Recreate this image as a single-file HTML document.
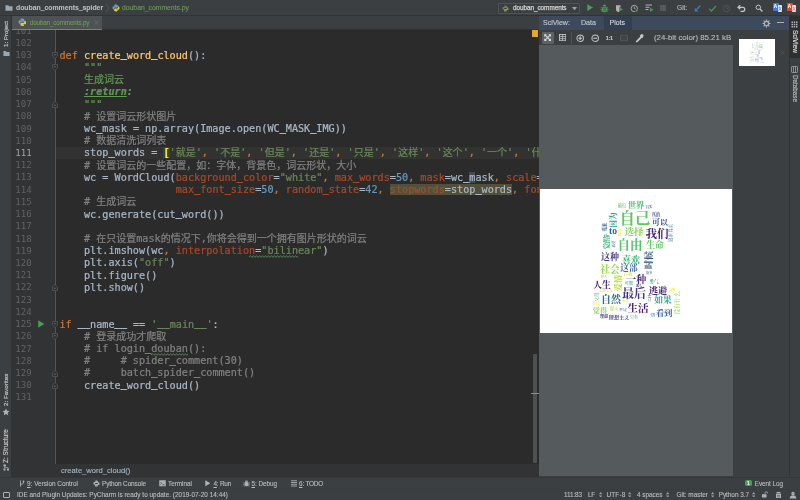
<!DOCTYPE html>
<html lang="zh">
<head>
<meta charset="utf-8">
<title>douban_comments_spider</title>
<style>
*{box-sizing:border-box;margin:0;padding:0}
html,body{width:800px;height:500px;overflow:hidden;background:#3c3f41}
body{position:relative;font-family:"Liberation Sans","Noto Sans CJK SC",sans-serif;color:#bbbbbb;font-size:7.6px;-webkit-font-smoothing:antialiased}
.abs{position:absolute}
#root{position:absolute;left:0;top:0;width:800px;height:500px;will-change:transform}
#title{left:0;top:0;width:800px;height:16px;background:#3c3f41;border-bottom:1px solid #323232}
#tabs{left:11px;top:16px;width:528px;height:14px;background:#3c3f41;border-bottom:1px solid #323232}
#tab1{left:11.5px;top:16px;width:90.5px;height:13.5px;background:#4e5254;border-bottom:1.5px solid #4a8fbb}
#leftbar{left:0;top:16px;width:11.5px;height:461px;background:#3c3f41;border-right:1px solid #323232}
#rightbar{left:789px;top:16px;width:11px;height:461px;background:#3c3f41;border-left:1px solid #323232}
#editor{left:11.5px;top:30px;width:527.5px;height:434px;background:#2b2b2b;overflow:hidden}
#gutter{left:0;top:0;width:44px;height:434px;background:#313335;border-right:1px solid #555555}
#curline{left:44px;top:117px;width:484px;height:12.2px;background:#323232}
.num{position:absolute;left:3.7px;width:30px;height:12.2px;line-height:12.2px;font-family:"DejaVu Sans Mono","Liberation Mono",monospace;font-size:9.1px;color:#606366;white-space:pre}
.num.cur{color:#a4a3a3}
.ln{position:absolute;left:48px;height:12.2px;line-height:12.2px;font-family:"DejaVu Sans Mono","Liberation Mono","Noto Sans CJK SC",monospace;font-size:10.17px;color:#a9b7c6;white-space:pre;-webkit-text-stroke:0.22px}
.k{color:#cc7832}.f{color:#ffc66d}.s{color:#6a8759}.c{color:#808080}.d{color:#629755}.n{color:#6897bb}.a{color:#aa4926}.p{color:#a9b7c6}
.dt{color:#629755;font-weight:bold;font-style:italic;text-decoration:underline}
.dt2{color:#629755;font-weight:bold;font-style:italic}
.br{color:#ffef28;background:#36443f;font-weight:bold}
.hl{background:#52503a}
.a2{color:#9a5233}
.mh{color:#a9b7c6;background:#454a50}
.sw{color:#6a8759}
.cw{color:#808080}
#crumbs{left:11.5px;top:464px;width:527.5px;height:13px;background:#313335;color:#a9b7c6}
#toolbar{left:0;top:476.500px;width:800px;height:12.500px;background:#3c3f41;border-top:1px solid #35383a}
#status{left:0;top:489px;width:800px;height:11px;background:#3c3f41;border-top:1px solid #3a3d3f}
#scihead{left:539px;top:16px;width:250px;height:14px;background:#3d4a5b}
#scitool{left:539px;top:30px;width:194px;height:15.300px;background:#3c3f41}
#sciimg{left:539px;top:45.300px;width:194px;height:431.200px;background:#555a5c}
#scithumbs{left:733px;top:30px;width:56px;height:446.500px;background:#3c3f41}
.t{-webkit-text-stroke:0.120px;position:absolute;white-space:pre;line-height:10px;height:10px}
.vt{-webkit-text-stroke:0.150px;position:absolute;white-space:pre;transform-origin:0 0;transform:rotate(-90deg);line-height:10px;height:10px}
.vtr{-webkit-text-stroke:0.150px;position:absolute;white-space:pre;transform-origin:0 0;transform:rotate(90deg);line-height:10px;height:10px}
.ud{top:489.800px;font-size:6px;color:#9da0a2}
.wc{background:#fff;overflow:hidden;will-change:transform;font-family:"Liberation Serif","Noto Serif CJK SC",serif;font-weight:700}
.wc span{position:absolute;white-space:nowrap;line-height:1}
.ln i{font-style:normal;position:relative;top:-1.300px;-webkit-text-stroke:0.550px}
.th span{opacity:.5}
.ln b{font-weight:normal;font-size:10px}
</style>
</head>
<body>
<div id="root">
<!-- title / navigation bar -->
<div id="title" class="abs"></div>
<svg class="abs" style="left:4.5px;top:4px" width="8" height="8" viewBox="0 0 16 16"><path d="M1 2.5h5.5l1.6 2H15v9H1z" fill="#9aa7b0"/></svg>
<span class="t" style="left:16px;top:3px;font-size:6.85px;font-weight:bold;color:#bbbbbb">douban_comments_spider</span>
<svg class="abs" style="left:105px;top:3px" width="5" height="10" viewBox="0 0 5 10"><path d="M1 0.5l3 4.5l-3 4.5" fill="none" stroke="#55585a" stroke-width="0.8"/></svg>
<svg class="abs pyi" style="left:112px;top:4px" width="8" height="8" viewBox="0 0 16 16"><path d="M7.8 1C4.6 1 4.8 2.4 4.8 2.4v1.5h3.1v.5H3.4S1 4.100 1 7.500s2.100 3.300 2.100 3.300h1.300V9.200s-.1-2.100 2.100-2.100h3.000s2.000 0 2.000-1.900V2.900S11.800 1 7.800 1z" fill="#6f9fd0"/><path d="M8.200 15c3.200 0 3.000-1.400 3.000-1.400v-1.500H8.100v-.5h4.500S15 11.900 15 8.500s-2.100-3.300-2.100-3.300h-1.300v1.600s.1 2.100-2.100 2.100H6.500s-2.000 0-2.000 1.900v2.300S4.200 15 8.200 15z" fill="#d9d43c"/></svg>
<span class="t" style="letter-spacing:-0.019px;left:122px;top:3px;font-size:6.85px;color:#6a9955">douban_comments.py</span>
<!-- run configuration -->
<div class="abs" style="left:498px;top:2.5px;width:82px;height:11px;border:1px solid #4f5355;border-radius:1px"></div>
<svg class="abs pyi" style="left:501.5px;top:4.5px" width="7" height="7" viewBox="0 0 16 16"><path d="M7.8 1C4.6 1 4.8 2.4 4.8 2.4v1.5h3.1v.5H3.4S1 4.100 1 7.500s2.100 3.300 2.100 3.300h1.300V9.200s-.1-2.100 2.100-2.100h3.000s2.000 0 2.000-1.900V2.900S11.800 1 7.800 1z" fill="#707b68"/><path d="M8.200 15c3.200 0 3.000-1.400 3.000-1.400v-1.500H8.100v-.5h4.500S15 11.900 15 8.500s-2.100-3.300-2.100-3.300h-1.300v1.600s.1 2.100-2.100 2.100H6.500s-2.000 0-2.000 1.900v2.300S4.200 15 8.200 15z" fill="#9c9549"/></svg>
<span class="t" style="letter-spacing:-0.057px;left:513px;top:3px;font-size:6.4px;color:#d2d2d2;-webkit-text-stroke:0.250px">douban_comments</span>
<svg class="abs" style="left:571.5px;top:6.5px" width="5" height="3.500" viewBox="0 0 10 7"><path d="M0 0h10L5 7z" fill="#9da0a2"/></svg>
<!-- run -->
<svg class="abs" style="left:587px;top:4.300px" width="6.200" height="7.200" viewBox="0 0 7 8"><path d="M0.300 0.200L6.800 4L0.300 7.800z" fill="#499c54"/></svg>
<!-- debug bug -->
<svg class="abs" style="left:600px;top:3.500px" width="9" height="9" viewBox="0 0 18 18"><rect x="4" y="5" width="10" height="11.500" rx="4" fill="#499c54"/><path d="M5.500 4.200a3.500 3.200 0 0 1 7 0z" fill="#499c54"/><path d="M1.500 7.500h3M13.500 7.500h3M1 11h3.500M13.500 11H17M2 14.500h3M13 14.500h3" stroke="#499c54" stroke-width="1.600"/><path d="M6 8.500h6M6 12h6" stroke="#3c3f41" stroke-width="1.300"/></svg>
<!-- coverage -->
<svg class="abs" style="left:614.5px;top:3.500px" width="9" height="9" viewBox="0 0 18 18"><path d="M2 2.500h9v9.500c0 2-4.500 4.500-4.500 4.500S2 14 2 12z" fill="#afb1b3"/><path d="M9.500 6.500l7.500 4.300l-7.500 4.300z" fill="#499c54" stroke="#3c3f41" stroke-width="1"/></svg>
<!-- profile -->
<svg class="abs" style="left:629.5px;top:3.500px" width="9" height="9" viewBox="0 0 18 18"><circle cx="8.500" cy="9" r="6.300" fill="none" stroke="#afb1b3" stroke-width="1.800"/><path d="M8.500 5v4.300h3" fill="none" stroke="#afb1b3" stroke-width="1.600"/><path d="M11 9.500l6.500 3.700L11 17z" fill="#499c54" stroke="#3c3f41" stroke-width="1"/></svg>
<!-- concurrency -->
<svg class="abs" style="left:644.5px;top:4px" width="9" height="8" viewBox="0 0 18 16"><path d="M1 2h13M1 6.500h8M1 11h6" stroke="#afb1b3" stroke-width="2.200"/><path d="M10 7.500l7 4L10 15.500z" fill="#499c54"/></svg>
<!-- stop -->
<div class="abs" style="left:660px;top:5px;width:6px;height:6px;background:#56595b"></div>
<span class="t" style="left:677px;top:3px;font-size:6.6px;color:#bbbbbb">Git:</span>
<!-- update (blue arrow) -->
<svg class="abs" style="left:692.5px;top:3.500px" width="9" height="9" viewBox="0 0 18 18"><path d="M15 3L6.500 11.500" stroke="#3a7fb8" stroke-width="2.600" fill="none"/><path d="M3.500 7.500v7.500h7.500z" fill="#3a7fb8"/></svg>
<!-- commit (green check) -->
<svg class="abs" style="left:707.5px;top:3.500px" width="9" height="9" viewBox="0 0 18 18"><path d="M2.500 9.500l4.500 4.500L16 4" stroke="#45914f" stroke-width="2.800" fill="none"/></svg>
<!-- history clock (dim) -->
<svg class="abs" style="left:721.5px;top:3.500px" width="9" height="9" viewBox="0 0 18 18"><circle cx="9" cy="9" r="6.500" fill="none" stroke="#54575a" stroke-width="1.800"/><path d="M9 5v4.500h3.500" fill="none" stroke="#54575a" stroke-width="1.600"/></svg>
<!-- revert -->
<svg class="abs" style="left:736.5px;top:3.500px" width="9" height="9" viewBox="0 0 18 18"><path d="M4 6.500h7.500a4 4 0 0 1 0 8H7" fill="none" stroke="#c4c6c8" stroke-width="2.500"/><path d="M6.500 2.500L2 6.500l4.500 4" fill="none" stroke="#c4c6c8" stroke-width="2.500"/></svg>
<!-- search -->
<svg class="abs" style="left:755px;top:4.300px" width="8.300" height="8.300" viewBox="0 0 20 20"><circle cx="8" cy="8" r="5.300" fill="none" stroke="#c4c6c8" stroke-width="2.400"/><path d="M12 12l6 6" stroke="#c4c6c8" stroke-width="3"/></svg>
<!-- translate icons -->
<div class="abs" style="left:772.600px;top:2.800px;width:6px;height:8.700px;background:#3f7de0;border-radius:1px"></div>
<div class="abs" style="left:777.600px;top:5px;width:4.700px;height:6.900px;background:#e4e8ee;border-radius:0.800px"></div>
<span class="t" style="left:773.700px;top:2px;font-size:4.600px;color:#ffffff;font-weight:bold">A</span>
<span class="t" style="left:778px;top:3.600px;font-size:3.800px;color:#3f6fc0">文</span>
<div class="abs" style="left:786.600px;top:2.800px;width:6px;height:8.700px;background:#e0492f;border-radius:1px"></div>
<div class="abs" style="left:791.600px;top:5px;width:4.700px;height:6.900px;background:#f1e3e1;border-radius:0.800px"></div>
<span class="t" style="left:787.700px;top:2px;font-size:4.600px;color:#ffffff;font-weight:bold">A</span>
<span class="t" style="left:792px;top:3.600px;font-size:3.800px;color:#c0503f">文</span>

<div id="tabs" class="abs"></div>
<div id="tab1" class="abs"></div>
<svg class="abs pyi" style="left:17.500px;top:18.200px" width="8.600" height="8.600" viewBox="0 0 16 16"><path d="M7.8 1C4.6 1 4.8 2.4 4.8 2.4v1.5h3.1v.5H3.4S1 4.100 1 7.500s2.100 3.300 2.100 3.300h1.300V9.200s-.1-2.100 2.100-2.100h3.000s2.000 0 2.000-1.900V2.900S11.800 1 7.800 1z" fill="#6f9fd0"/><path d="M8.200 15c3.200 0 3.000-1.400 3.000-1.400v-1.500H8.100v-.5h4.500S15 11.900 15 8.500s-2.100-3.300-2.100-3.300h-1.300v1.600s.1 2.100-2.100 2.100H6.500s-2.000 0-2.000 1.900v2.300S4.200 15 8.200 15z" fill="#d9d43c"/></svg>
<span class="t" style="letter-spacing:-0.137px;left:29.800px;top:17.500px;font-size:6.3px;color:#6a9955">douban_comments.py</span>
<svg class="abs" style="left:93.500px;top:20px" width="5" height="5" viewBox="0 0 10 10"><path d="M1 1l8 8M9 1l-8 8" stroke="#6e7173" stroke-width="1.300"/></svg>

<div id="leftbar" class="abs"></div>
<span class="vt" style="left:1.200px;top:47.200px;font-size:6.15px;color:#c8c8c8">1: Project</span>
<svg class="abs" style="left:2.500px;top:49.800px" width="7" height="7" viewBox="0 0 16 16"><path d="M1 2.500h5.500l1.600 2H15v9H1z" fill="#9aa7b0"/></svg>
<span class="vt" style="left:1px;top:406px;font-size:6.2px;color:#c8c8c8">2: Favorites</span>
<svg class="abs" style="left:2px;top:408px" width="8" height="8" viewBox="0 0 16 16"><path d="M8 1l2.100 4.600l5 .6l-3.700 3.400l1 4.900L8 12l-4.400 2.500l1-4.900L.9 6.200l5-.6z" fill="#afb1b3"/></svg>
<span class="vt" style="left:1px;top:462.500px;font-size:6.5px;color:#c8c8c8">Z: Structure</span>
<svg class="abs" style="left:2.500px;top:463.500px" width="7" height="7" viewBox="0 0 14 14"><rect x="1" y="1" width="5" height="4" fill="#afb1b3"/><rect x="1" y="9" width="4" height="4" fill="#afb1b3"/><rect x="8" y="9" width="4" height="4" fill="#afb1b3"/><path d="M3 5v4M3 7h7v2" stroke="#afb1b3" stroke-width="1.200" fill="none"/></svg>

<div id="rightbar" class="abs"></div>
<div class="abs" style="left:789.5px;top:16px;width:10.5px;height:42px;background:#2d2f30"></div>
<svg class="abs" style="left:791px;top:21px" width="7" height="7" viewBox="0 0 14 14"><path d="M1 1h3v3H1zM5.500 1h3v3h-3zM10 1h3v3h-3zM1 5.500h3v3H1zM5.500 5.500h3v3h-3zM10 5.500h3v3h-3zM1 10h3v3H1zM5.500 10h3v3h-3zM10 10h3v3h-3z" fill="#afb1b3"/></svg>
<span class="vtr" style="left:799.5px;top:30px;font-size:6.5px;color:#dddddd">SciView</span>
<svg class="abs" style="left:791px;top:66px" width="7" height="7" viewBox="0 0 14 14"><rect x="1" y="1" width="12" height="12" rx="1.500" fill="none" stroke="#afb1b3" stroke-width="1.400"/><path d="M5 1v12M9 1v12" stroke="#afb1b3" stroke-width="1.300"/></svg>
<span class="vtr" style="left:799.5px;top:75px;font-size:6.3px;color:#bbbbbb">Database</span>

<div id="editor" class="abs">
<div id="curline" class="abs"></div>
<div id="gutter" class="abs"></div>
<div class="num" style="top:-5.20px">101</div>
<div class="num" style="top:7.02px">102</div>
<div class="num" style="top:19.24px">103</div>
<div class="num" style="top:31.47px">104</div>
<div class="num" style="top:43.69px">105</div>
<div class="num" style="top:55.91px">106</div>
<div class="num" style="top:68.13px">107</div>
<div class="num" style="top:80.35px">108</div>
<div class="num" style="top:92.58px">109</div>
<div class="num" style="top:104.80px">110</div>
<div class="num cur" style="top:117.02px">111</div>
<div class="num" style="top:129.24px">112</div>
<div class="num" style="top:141.46px">113</div>
<div class="num" style="top:153.69px">114</div>
<div class="num" style="top:165.91px">115</div>
<div class="num" style="top:178.13px">116</div>
<div class="num" style="top:190.35px">117</div>
<div class="num" style="top:202.57px">118</div>
<div class="num" style="top:214.80px">119</div>
<div class="num" style="top:227.02px">120</div>
<div class="num" style="top:239.24px">121</div>
<div class="num" style="top:251.46px">122</div>
<div class="num" style="top:263.68px">123</div>
<div class="num" style="top:275.91px">124</div>
<div class="num" style="top:288.13px">125</div>
<div class="num" style="top:300.35px">126</div>
<div class="num" style="top:312.57px">127</div>
<div class="num" style="top:324.79px">128</div>
<div class="num" style="top:337.02px">129</div>
<div class="num" style="top:349.24px">130</div>
<div class="num" style="top:361.46px">131</div>
<div class="ln" style="top:-4.80px"></div>
<div class="ln" style="top:7.42px"></div>
<div class="ln" style="top:19.64px"><span class="k">def </span><span class="f">create<i>_</i>word<i>_</i>cloud</span><span class="p">():</span></div>
<div class="ln" style="top:31.87px"><span class="d">    """</span></div>
<div class="ln" style="top:44.09px"><span class="d">    <b>生成词云</b></span></div>
<div class="ln" style="top:56.31px"><span class="d">    </span><span class="dt">:return</span><span class="dt2">:</span></div>
<div class="ln" style="top:68.53px"><span class="d">    """</span></div>
<div class="ln" style="top:80.75px"><span class="c">    # <b>设置词云形状图片</b></span></div>
<div class="ln" style="top:92.98px"><span class="p">    wc<i>_</i>mask = np.array(Image.open(WC<i>_</i>MASK<i>_</i>IMG))</span></div>
<div class="ln" style="top:105.20px"><span class="c">    # <b>数据清洗词列表</b></span></div>
<div class="ln" style="top:117.42px"><span class="p">    stop<i>_</i>words = </span><span class="br">[</span><span class="s">'<b>就是</b>'</span><span class="k">, </span><span class="s">'<b>不是</b>'</span><span class="k">, </span><span class="s">'<b>但是</b>'</span><span class="k">, </span><span class="s">'<b>还是</b>'</span><span class="k">, </span><span class="s">'<b>只是</b>'</span><span class="k">, </span><span class="s">'<b>这样</b>'</span><span class="k">, </span><span class="s">'<b>这个</b>'</span><span class="k">, </span><span class="s">'<b>一个</b>'</span><span class="k">, </span><span class="s">'<b>什么</b>'</span><span class="k">, </span><span class="s">'<b>电影</b>'</span></div>
<div class="ln" style="top:129.64px"><span class="c">    # <b>设置词云的一些配置，如：字体，背景色，词云形状，大小</b></span></div>
<div class="ln" style="top:141.86px"><span class="p">    wc = WordCloud(</span><span class="a">background<i>_</i>color</span><span class="p">=</span><span class="s">"white"</span><span class="k">, </span><span class="a">max<i>_</i>words</span><span class="p">=</span><span class="n">50</span><span class="k">, </span><span class="a">mask</span><span class="p">=</span><span class="p">wc<i>_</i></span><span class="mh">m</span><span class="p">ask</span><span class="k">, </span><span class="a">scale</span><span class="p">=</span><span class="n">4</span><span class="k">, </span></div>
<div class="ln" style="top:154.09px"><span class="p">                   </span><span class="a">max<i>_</i>font<i>_</i>size</span><span class="p">=</span><span class="n">50</span><span class="k">, </span><span class="a">random<i>_</i>state</span><span class="p">=</span><span class="n">42</span><span class="k">, </span><span class="hl"><span class="a2">stopwords</span><span class="p">=stop<i>_</i>words</span></span><span class="k">, </span><span class="a">font<i>_</i>path</span><span class="p">=</span><span class="p">WC<i>_</i>FONT<i>_</i>PATH)</span></div>
<div class="ln" style="top:166.31px"><span class="c">    # <b>生成词云</b></span></div>
<div class="ln" style="top:178.53px"><span class="p">    wc.generate(cut<i>_</i>word())</span></div>
<div class="ln" style="top:190.75px"></div>
<div class="ln" style="top:202.97px"><span class="c">    # <b>在只设置</b>mask<b>的情况下</b>,<b>你将会得到一个拥有图片形状的词云</b></span></div>
<div class="ln" style="top:215.20px"><span class="p">    plt.imshow(wc</span><span class="k">, </span><span class="a">interpolation</span><span class="p">=</span><span class="s">"</span><span class="sw">bilinear</span><span class="s">"</span><span class="p">)</span></div>
<div class="ln" style="top:227.42px"><span class="p">    plt.axis(</span><span class="s">"off"</span><span class="p">)</span></div>
<div class="ln" style="top:239.64px"><span class="p">    plt.figure()</span></div>
<div class="ln" style="top:251.86px"><span class="p">    plt.show()</span></div>
<div class="ln" style="top:264.08px"></div>
<div class="ln" style="top:276.31px"></div>
<div class="ln" style="top:288.53px"><span class="k">if </span><span class="p"><i>_</i><i>_</i>name<i>_</i><i>_</i> == </span><span class="s">'<i>_</i><i>_</i>main<i>_</i><i>_</i>'</span><span class="p">:</span></div>
<div class="ln" style="top:300.75px"><span class="c">    # <b>登录成功才爬取</b></span></div>
<div class="ln" style="top:312.97px"><span class="c">    # if login<i>_</i></span><span class="cw">douban</span><span class="c">():</span></div>
<div class="ln" style="top:325.19px"><span class="c">    #     # spider<i>_</i>comment(30)</span></div>
<div class="ln" style="top:337.42px"><span class="c">    #     batch<i>_</i>spider<i>_</i>comment()</span></div>
<div class="ln" style="top:349.64px"><span class="p">    create<i>_</i>word<i>_</i>cloud()</span></div>
<div class="ln" style="top:361.86px"></div>
<svg class="abs" style="left:40.500px;top:22.04px" width="6" height="7" viewBox="0 0 6 7"><path d="M0.5 0.5h5v3.6l-2.500 2.400l-2.500-2.400z" fill="#2d2e30" stroke="#54585b" stroke-width="0.800"/><path d="M1.800 2.800h2.400" stroke="#7a7e82" stroke-width="0.700"/></svg>
<svg class="abs" style="left:40.500px;top:34.27px" width="6" height="7" viewBox="0 0 6 7"><path d="M0.5 0.5h5v3.6l-2.500 2.400l-2.500-2.400z" fill="#2d2e30" stroke="#54585b" stroke-width="0.800"/><path d="M1.800 2.800h2.400" stroke="#7a7e82" stroke-width="0.700"/></svg>
<svg class="abs" style="left:40.500px;top:70.93px" width="6" height="7" viewBox="0 0 6 7"><path d="M0.5 6.500h5v-3.600l-2.500-2.400l-2.500 2.400z" fill="#2d2e30" stroke="#54585b" stroke-width="0.800"/><path d="M1.800 4.200h2.400" stroke="#7a7e82" stroke-width="0.700"/></svg>
<svg class="abs" style="left:40.500px;top:254.26px" width="6" height="7" viewBox="0 0 6 7"><path d="M0.5 6.500h5v-3.600l-2.500-2.400l-2.500 2.400z" fill="#2d2e30" stroke="#54585b" stroke-width="0.800"/><path d="M1.800 4.200h2.400" stroke="#7a7e82" stroke-width="0.700"/></svg>
<svg class="abs" style="left:40.500px;top:290.93px" width="6" height="7" viewBox="0 0 6 7"><path d="M0.5 0.5h5v3.6l-2.500 2.400l-2.500-2.400z" fill="#2d2e30" stroke="#54585b" stroke-width="0.800"/><path d="M1.800 2.800h2.400" stroke="#7a7e82" stroke-width="0.700"/></svg>
<svg class="abs" style="left:40.500px;top:303.15px" width="6" height="7" viewBox="0 0 6 7"><path d="M0.5 0.5h5v3.6l-2.500 2.400l-2.500-2.400z" fill="#2d2e30" stroke="#54585b" stroke-width="0.800"/><path d="M1.800 2.800h2.400" stroke="#7a7e82" stroke-width="0.700"/></svg>
<svg class="abs" style="left:40.500px;top:339.82px" width="6" height="7" viewBox="0 0 6 7"><path d="M0.5 6.500h5v-3.600l-2.500-2.400l-2.500 2.400z" fill="#2d2e30" stroke="#54585b" stroke-width="0.800"/><path d="M1.800 4.200h2.400" stroke="#7a7e82" stroke-width="0.700"/></svg>
<svg class="abs" style="left:40.500px;top:352.04px" width="6" height="7" viewBox="0 0 6 7"><path d="M0.5 6.500h5v-3.600l-2.500-2.400l-2.500 2.400z" fill="#2d2e30" stroke="#54585b" stroke-width="0.800"/><path d="M1.800 4.200h2.400" stroke="#7a7e82" stroke-width="0.700"/></svg>
<svg class="abs" style="left:26.200px;top:290.33px" width="6.500" height="8" viewBox="0 0 6.500 8"><path d="M0.200 0.200L6.300 4L0.200 7.800z" fill="#499c54"/></svg>
<svg class="abs" style="left:237.72px;top:225.00px" width="49.0" height="3" viewBox="0 0 49.0 3"><path d="M0 2 L1.5 0.600 L3.0 2.400 L4.5 0.600 L6.0 2.400 L7.5 0.600 L9.0 2.400 L10.5 0.600 L12.0 2.400 L13.5 0.600 L15.0 2.400 L16.5 0.600 L18.0 2.400 L19.5 0.600 L21.0 2.400 L22.5 0.600 L24.0 2.400 L25.5 0.600 L27.0 2.400 L28.5 0.600 L30.0 2.400 L31.5 0.600 L33.0 2.400 L34.5 0.600 L36.0 2.400 L37.5 0.600 L39.0 2.400 L40.5 0.600 L42.0 2.400 L43.5 0.600 L45.0 2.400 L46.5 0.600 L48.0 2.400 L49.5 0.600" fill="none" stroke="#6d9a6f" stroke-width="0.700"/></svg>
<svg class="abs" style="left:139.80px;top:322.77px" width="36.7" height="3" viewBox="0 0 36.7 3"><path d="M0 2 L1.5 0.600 L3.0 2.400 L4.5 0.600 L6.0 2.400 L7.5 0.600 L9.0 2.400 L10.5 0.600 L12.0 2.400 L13.5 0.600 L15.0 2.400 L16.5 0.600 L18.0 2.400 L19.5 0.600 L21.0 2.400 L22.5 0.600 L24.0 2.400 L25.5 0.600 L27.0 2.400 L28.5 0.600 L30.0 2.400 L31.5 0.600 L33.0 2.400 L34.5 0.600 L36.0 2.400 L37.5 0.600" fill="none" stroke="#6d9a6f" stroke-width="0.700"/></svg>
<div class="abs" style="left:521.500px;top:324px;width:3.500px;height:109px;background:#4d4f51;border-radius:1px"></div>
<div class="abs" style="left:520px;top:0.300px;width:6px;height:6.500px;background:#e2a82b"></div>
<div class="abs" style="left:519.500px;top:362.500px;width:8px;height:1.200px;background:#a8922f"></div>
</div>
<div id="crumbs" class="abs"><span class="t" style="left:49.5px;top:1.5px">create_word_cloud()</span></div>
<div id="scihead" class="abs"></div>
<div id="scitool" class="abs"></div>
<div id="sciimg" class="abs"></div>
<div id="scithumbs" class="abs"></div>
<!-- header -->
<div class="abs" style="left:604px;top:16px;width:28px;height:14px;background:#334051"></div>
<span class="t" style="left:543px;top:18px;font-size:7.05px;color:#c3c9cf">SciView:</span>
<span class="t" style="left:581px;top:18px;font-size:7.1px;color:#c3c9cf">Data</span>
<span class="t" style="left:609.5px;top:18px;font-size:6.95px;color:#d5d9dd">Plots</span>
<svg class="abs" style="left:761.500px;top:18.500px" width="9" height="9" viewBox="0 0 18 18"><circle cx="9" cy="9" r="4.300" fill="none" stroke="#afb1b3" stroke-width="2.600"/><g stroke="#afb1b3" stroke-width="2.400"><path d="M9 1v3M9 14v3M1 9h3M14 9h3M3.300 3.300l2.200 2.200M12.500 12.500l2.200 2.200M3.300 14.700l2.200-2.200M12.500 5.500l2.200-2.200"/></g></svg>
<div class="abs" style="left:777px;top:22.200px;width:7px;height:1px;background:#afb1b3"></div>
<!-- toolbar -->
<div class="abs" style="left:541.500px;top:31.500px;width:12.500px;height:12.500px;background:#5c6164;border-radius:1px"></div>
<svg class="abs" style="left:544.300px;top:34.200px" width="7.200" height="7.200" viewBox="0 0 16 16"><g fill="#dcdee0"><path d="M0.500 0.500h6L0.500 6.500zM15.500 0.500v6L9.500 0.500zM0.500 15.500v-6L6.500 15.500zM15.500 15.500h-6L15.500 9.500z"/></g><path d="M2 2l12 12M14 2L2 14" stroke="#dcdee0" stroke-width="2.400"/></svg>
<svg class="abs" style="left:558.800px;top:34.200px" width="7.200" height="7.200" viewBox="0 0 16 16"><rect x="1" y="1" width="14" height="14" fill="none" stroke="#bfc1c3" stroke-width="2.200"/><path d="M1 5.800h14M1 10.500h14M8 1v14" stroke="#bfc1c3" stroke-width="1.800"/></svg>
<div class="abs" style="left:571px;top:32px;width:1px;height:12px;background:#515456"></div>
<svg class="abs" style="left:576.300px;top:33.800px" width="8.400" height="8.400" viewBox="0 0 18 18"><circle cx="9" cy="9" r="7" fill="none" stroke="#c4c6c8" stroke-width="2.200"/><path d="M5 9h8M9 5v8" stroke="#c4c6c8" stroke-width="2.400"/></svg>
<svg class="abs" style="left:590.800px;top:33.800px" width="8.400" height="8.400" viewBox="0 0 18 18"><circle cx="9" cy="9" r="7" fill="none" stroke="#c4c6c8" stroke-width="2.200"/><path d="M5 9h8" stroke="#c4c6c8" stroke-width="2.400"/></svg>
<span class="t" style="left:605.800px;top:33px;font-size:5.400px;font-weight:bold;letter-spacing:-0.300px;color:#c4c6c8">1:1</span>
<div class="abs" style="left:620px;top:34.600px;width:7.600px;height:6.400px;background:#424547;border:1px solid #505355"></div>
<svg class="abs" style="left:634.500px;top:33.500px" width="9" height="9" viewBox="0 0 18 18"><path d="M10.500 3l4.500 4.500M12.500 5l-8.500 8.500l-1.500 2.500l2.500-1.500L13.500 6" fill="none" stroke="#c4c6c8" stroke-width="2.300"/><path d="M11.500 1.500a2.500 2.500 0 0 1 5 3.500l-2 2l-4.500-4.500z" fill="#c4c6c8"/></svg>
<span class="t" style="left:654px;top:33px;font-size:7.85px;color:#bbbbbb">(24-bit color) 85.21 kB</span>
<!-- thumbnail -->
<svg class="abs" style="left:779.500px;top:49.500px" width="5" height="5" viewBox="0 0 10 10"><path d="M1 1l8 8M9 1l-8 8" stroke="#5a5d5f" stroke-width="1.200"/></svg>
<!-- image -->
<div class="abs wc" style="left:540.3px;top:189px;width:192px;height:144px">
<span style="left:95.80px;top:16.12px;font-size:33.5px;color:#4cbb6e;transform:translate(-50%,-50%) scale(0.2500)">世界</span>
<span style="left:82.25px;top:17.06px;font-size:16.8px;color:#5ec962;transform:translate(-50%,-50%) scale(0.2500)">旅行</span>
<span style="left:109.45px;top:17.67px;font-size:13.5px;color:#3b528b;transform:translate(-50%,-50%) scale(0.2500)">其实</span>
<span style="left:95.35px;top:30.27px;font-size:61.5px;color:#62c75f;transform:translate(-50%,-50%) scale(0.2500)">自己</span>
<span style="left:115.95px;top:25.71px;font-size:16.8px;color:#3e4a89;transform:translate(-50%,-50%) scale(0.2500)">真的</span>
<span style="left:119.55px;top:33.10px;font-size:31.7px;color:#3a548c;transform:translate(-50%,-50%) scale(0.2500)">可以</span>
<span style="left:74.28px;top:30.60px;font-size:30.6px;color:#2a9d8f;transform:translate(-50%,-50%) rotate(-90deg) scale(0.2500)">因为</span>
<span style="left:72.85px;top:42.25px;font-size:38.5px;color:#33638d;transform:translate(-50%,-50%) scale(0.2500)">to</span>
<span style="left:80.30px;top:42.80px;font-size:15.7px;color:#f0e51c;transform:translate(-50%,-50%) rotate(-90deg) scale(0.2500)">现在</span>
<span style="left:94.00px;top:42.67px;font-size:37.3px;color:#7fd34e;transform:translate(-50%,-50%) scale(0.2500)">选择</span>
<span style="left:116.90px;top:45.28px;font-size:46.4px;color:#46256f;transform:translate(-50%,-50%) scale(0.2500)">我们</span>
<span style="left:64.51px;top:37.65px;font-size:16.8px;color:#3b6c8f;transform:translate(-50%,-50%) rotate(-90deg) scale(0.2500)">孤独</span>
<span style="left:66.95px;top:46.60px;font-size:18.2px;color:#2a9d8f;transform:translate(-50%,-50%) scale(0.2500)">the</span>
<span style="left:66.88px;top:54.10px;font-size:26.1px;color:#3dbc74;transform:translate(-50%,-50%) rotate(-90deg) scale(0.2500)">觉醒</span>
<span style="left:73.87px;top:55.25px;font-size:13.9px;color:#4a7fa8;transform:translate(-50%,-50%) rotate(-90deg) scale(0.2500)">希望</span>
<span style="left:90.35px;top:55.63px;font-size:50.3px;color:#52c569;transform:translate(-50%,-50%) scale(0.2500)">自由</span>
<span style="left:114.65px;top:56.34px;font-size:35.4px;color:#5ec962;transform:translate(-50%,-50%) scale(0.2500)">生命</span>
<span style="left:70.35px;top:68.05px;font-size:36.2px;color:#443a83;transform:translate(-50%,-50%) scale(0.2500)">这种</span>
<span style="left:91.00px;top:70.95px;font-size:36.0px;color:#3aba76;transform:translate(-50%,-50%) scale(0.2500)">喜欢</span>
<span style="left:108.76px;top:70.80px;font-size:36.4px;color:#32527f;transform:translate(-50%,-50%) rotate(-90deg) scale(0.2500)">时候</span>
<span style="left:70.20px;top:81.49px;font-size:39.3px;color:#90d743;transform:translate(-50%,-50%) scale(0.2500)">社会</span>
<span style="left:89.35px;top:79.23px;font-size:34.6px;color:#38679a;transform:translate(-50%,-50%) scale(0.2500)">这部</span>
<span style="left:87.70px;top:86.31px;font-size:16.6px;color:#e3e04b;transform:translate(-50%,-50%) scale(0.2500)">自我</span>
<span style="left:63.90px;top:87.57px;font-size:13.2px;color:#a5db36;transform:translate(-50%,-50%) scale(0.2500)">世人</span>
<span style="left:108.90px;top:83.66px;font-size:12.4px;color:#4c6a9c;transform:translate(-50%,-50%) scale(0.2500)">故事</span>
<span style="left:95.70px;top:91.07px;font-size:41.4px;color:#472d7b;transform:translate(-50%,-50%) scale(0.2500)">一种</span>
<span style="left:77.51px;top:94.35px;font-size:32.5px;color:#b5de2b;transform:translate(-50%,-50%) rotate(-90deg) scale(0.2500)">爱情</span>
<span style="left:114.00px;top:92.73px;font-size:18.6px;color:#2a9d8f;transform:translate(-50%,-50%) scale(0.2500)">勇气</span>
<span style="left:61.65px;top:95.94px;font-size:35.4px;color:#482475;transform:translate(-50%,-50%) scale(0.2500)">人生</span>
<span style="left:88.70px;top:95.16px;font-size:16.6px;color:#5fb8a0;transform:translate(-50%,-50%) scale(0.2500)">可能</span>
<span style="left:98.55px;top:96.56px;font-size:13.0px;color:#46327e;transform:translate(-50%,-50%) scale(0.2500)">那么</span>
<span style="left:94.40px;top:105.36px;font-size:48.4px;color:#453781;transform:translate(-50%,-50%) scale(0.2500)">最后</span>
<span style="left:117.90px;top:101.97px;font-size:37.3px;color:#46256f;transform:translate(-50%,-50%) scale(0.2500)">逃避</span>
<span style="left:131.70px;top:101.06px;font-size:12.4px;color:#f4e61e;transform:translate(-50%,-50%) scale(0.2500)">文明</span>
<span style="left:65.85px;top:102.36px;font-size:12.7px;color:#e6e34a;transform:translate(-50%,-50%) scale(0.2500)">荒野生存</span>
<span style="left:56.98px;top:107.90px;font-size:18.6px;color:#79c5c0;transform:translate(-50%,-50%) rotate(-90deg) scale(0.2500)">父母</span>
<span style="left:71.05px;top:110.95px;font-size:40.0px;color:#2f6b8e;transform:translate(-50%,-50%) scale(0.2500)">自然</span>
<span style="left:123.30px;top:111.43px;font-size:34.8px;color:#2fa58a;transform:translate(-50%,-50%) scale(0.2500)">如果</span>
<span style="left:109.97px;top:109.30px;font-size:13.7px;color:#6a7fae;transform:translate(-50%,-50%) rotate(-90deg) scale(0.2500)">这样</span>
<span style="left:84.70px;top:112.21px;font-size:12.4px;color:#e9e66a;transform:translate(-50%,-50%) scale(0.2500)">流浪</span>
<span style="left:55.80px;top:114.89px;font-size:14.9px;color:#f1e75c;transform:translate(-50%,-50%) scale(0.2500)">金钱</span>
<span style="left:136.89px;top:114.40px;font-size:23.6px;color:#b4df7c;transform:translate(-50%,-50%) rotate(-90deg) scale(0.2500)">没有什么</span>
<span style="left:98.35px;top:119.38px;font-size:42.0px;color:#481a6c;transform:translate(-50%,-50%) scale(0.2500)">生活</span>
<span style="left:59.90px;top:121.56px;font-size:28.6px;color:#8fd370;transform:translate(-50%,-50%) scale(0.2500)">觉得</span>
<span style="left:73.60px;top:120.31px;font-size:17.0px;color:#c9e571;transform:translate(-50%,-50%) scale(0.2500)">现实</span>
<span style="left:82.55px;top:120.99px;font-size:15.5px;color:#3a7c9a;transform:translate(-50%,-50%) scale(0.2500)">不过</span>
<span style="left:123.60px;top:123.52px;font-size:33.5px;color:#3b5f9a;transform:translate(-50%,-50%) scale(0.2500)">看到</span>
<span style="left:111.00px;top:127.20px;font-size:16.1px;color:#5a84b0;transform:translate(-50%,-50%) scale(0.2500)">一切</span>
<span style="left:64.05px;top:128.35px;font-size:16.4px;color:#424086;transform:translate(-50%,-50%) scale(0.2500)">理想</span>
<span style="left:79.15px;top:128.40px;font-size:20.4px;color:#4a4d92;transform:translate(-50%,-50%) scale(0.2500)">理想主义</span>
<span style="left:94.05px;top:128.50px;font-size:16.4px;color:#7fc8b8;transform:translate(-50%,-50%) scale(0.2500)">只有</span>
<span style="left:130.93px;top:43.80px;font-size:18.2px;color:#6a9bb8;transform:translate(-50%,-50%) rotate(-90deg) scale(0.2500)">追求真实</span>
</div>
<div class="abs wc th" style="left:739px;top:38.8px;width:35.8px;height:26.8px">
<span style="left:17.86px;top:3.01px;font-size:33.5px;color:#4cbb6e;transform:translate(-50%,-50%) scale(0.0466)">世界</span>
<span style="left:17.78px;top:5.64px;font-size:61.5px;color:#62c75f;transform:translate(-50%,-50%) scale(0.0466)">自己</span>
<span style="left:22.29px;top:6.17px;font-size:31.7px;color:#3a548c;transform:translate(-50%,-50%) scale(0.0466)">可以</span>
<span style="left:13.85px;top:5.71px;font-size:30.6px;color:#2a9d8f;transform:translate(-50%,-50%) rotate(-90deg) scale(0.0466)">因为</span>
<span style="left:13.58px;top:7.88px;font-size:38.5px;color:#33638d;transform:translate(-50%,-50%) scale(0.0466)">to</span>
<span style="left:17.53px;top:7.96px;font-size:37.3px;color:#7fd34e;transform:translate(-50%,-50%) scale(0.0466)">选择</span>
<span style="left:21.80px;top:8.44px;font-size:46.4px;color:#46256f;transform:translate(-50%,-50%) scale(0.0466)">我们</span>
<span style="left:16.85px;top:10.37px;font-size:50.3px;color:#52c569;transform:translate(-50%,-50%) scale(0.0466)">自由</span>
<span style="left:21.38px;top:10.51px;font-size:35.4px;color:#5ec962;transform:translate(-50%,-50%) scale(0.0466)">生命</span>
<span style="left:13.12px;top:12.69px;font-size:36.2px;color:#443a83;transform:translate(-50%,-50%) scale(0.0466)">这种</span>
<span style="left:16.97px;top:13.23px;font-size:36.0px;color:#3aba76;transform:translate(-50%,-50%) scale(0.0466)">喜欢</span>
<span style="left:20.28px;top:13.20px;font-size:36.4px;color:#32527f;transform:translate(-50%,-50%) rotate(-90deg) scale(0.0466)">时候</span>
<span style="left:13.09px;top:15.19px;font-size:39.3px;color:#90d743;transform:translate(-50%,-50%) scale(0.0466)">社会</span>
<span style="left:16.66px;top:14.77px;font-size:34.6px;color:#38679a;transform:translate(-50%,-50%) scale(0.0466)">这部</span>
<span style="left:17.84px;top:16.98px;font-size:41.4px;color:#472d7b;transform:translate(-50%,-50%) scale(0.0466)">一种</span>
<span style="left:14.45px;top:17.59px;font-size:32.5px;color:#b5de2b;transform:translate(-50%,-50%) rotate(-90deg) scale(0.0466)">爱情</span>
<span style="left:11.50px;top:17.89px;font-size:35.4px;color:#482475;transform:translate(-50%,-50%) scale(0.0466)">人生</span>
<span style="left:17.60px;top:19.64px;font-size:48.4px;color:#453781;transform:translate(-50%,-50%) scale(0.0466)">最后</span>
<span style="left:21.98px;top:19.01px;font-size:37.3px;color:#46256f;transform:translate(-50%,-50%) scale(0.0466)">逃避</span>
<span style="left:13.25px;top:20.69px;font-size:40.0px;color:#2f6b8e;transform:translate(-50%,-50%) scale(0.0466)">自然</span>
<span style="left:22.99px;top:20.78px;font-size:34.8px;color:#2fa58a;transform:translate(-50%,-50%) scale(0.0466)">如果</span>
<span style="left:18.34px;top:22.26px;font-size:42.0px;color:#481a6c;transform:translate(-50%,-50%) scale(0.0466)">生活</span>
<span style="left:11.17px;top:22.67px;font-size:28.6px;color:#8fd370;transform:translate(-50%,-50%) scale(0.0466)">觉得</span>
<span style="left:23.05px;top:23.03px;font-size:33.5px;color:#3b5f9a;transform:translate(-50%,-50%) scale(0.0466)">看到</span>
</div>

<div id="toolbar" class="abs"></div>
<div id="status" class="abs"></div>
<svg class="abs" style="left:18.500px;top:479.500px" width="6" height="7" viewBox="0 0 12 14"><path d="M3 1v12M3 8.500c5 0 6-1.500 6-4" fill="none" stroke="#afb1b3" stroke-width="1.700"/><circle cx="9" cy="3" r="1.800" fill="#afb1b3"/></svg>
<span class="t" style="letter-spacing:0.010px;left:27px;top:478.500px;font-size:6.4px;color:#bbbbbb"><u>9</u>: Version Control</span>
<svg class="abs pyi" style="left:92.500px;top:479.500px" width="7" height="7" viewBox="0 0 16 16"><path d="M7.8 1C4.6 1 4.8 2.4 4.8 2.4v1.5h3.1v.5H3.4S1 4.100 1 7.500s2.100 3.300 2.100 3.300h1.300V9.200s-.1-2.100 2.100-2.100h3.000s2.000 0 2.000-1.900V2.900S11.800 1 7.800 1z" fill="#afb1b3"/><path d="M8.200 15c3.200 0 3.000-1.400 3.000-1.400v-1.500H8.100v-.5h4.500S15 11.900 15 8.500s-2.100-3.300-2.100-3.300h-1.300v1.600s.1 2.100-2.100 2.100H6.500s-2.000 0-2.000 1.900v2.300S4.200 15 8.200 15z" fill="#afb1b3"/></svg>
<span class="t" style="letter-spacing:-0.080px;left:102px;top:478.500px;font-size:6.4px;color:#bbbbbb">Python Console</span>
<svg class="abs" style="left:158.500px;top:480px" width="7" height="6.500" viewBox="0 0 14 13"><rect x="0.500" y="0.500" width="13" height="12" fill="#afb1b3"/><path d="M3 4l2.500 2.500L3 9M7 9.500h4" stroke="#3c3f41" stroke-width="1.400" fill="none"/></svg>
<span class="t" style="letter-spacing:-0.020px;left:168px;top:478.500px;font-size:6.4px;color:#bbbbbb">Terminal</span>
<svg class="abs" style="left:204.500px;top:480px" width="5.500" height="6.500" viewBox="0 0 11 13"><path d="M0.500 0.500l10 6l-10 6z" fill="#afb1b3"/></svg>
<span class="t" style="letter-spacing:-0.224px;left:213.500px;top:478.500px;font-size:6.4px;color:#bbbbbb"><u>4</u>: Run</span>
<svg class="abs" style="left:242.500px;top:479.500px" width="7" height="7" viewBox="0 0 18 18"><ellipse cx="9" cy="10.500" rx="5" ry="6" fill="#afb1b3"/><path d="M5 4.500a4 3.300 0 0 1 8 0z" fill="#afb1b3"/><path d="M1 7.500h3.500M13.500 7.500H17M0.500 11h4M13.500 11h4M1.500 15h3.500M13 15h3.500" stroke="#afb1b3" stroke-width="1.800"/></svg>
<span class="t" style="letter-spacing:-0.057px;left:251.500px;top:478.500px;font-size:6.4px;color:#bbbbbb"><u>5</u>: Debug</span>
<svg class="abs" style="left:290.500px;top:480px" width="6.500" height="6.500" viewBox="0 0 13 13"><path d="M0 1.500h13M0 5h13M0 8.500h13M0 12h13" stroke="#afb1b3" stroke-width="1.700"/></svg>
<span class="t" style="letter-spacing:-0.192px;left:299px;top:478.500px;font-size:6.4px;color:#bbbbbb"><u>6</u>: TODO</span>
<!-- event log -->
<div class="abs" style="left:744.800px;top:479.600px;width:7px;height:6.800px;border-radius:1.800px;background:#43a054"></div>
<span class="t" style="left:746.900px;top:478.200px;font-size:5px;font-weight:bold;color:#f0f0f0">1</span>
<span class="t" style="letter-spacing:-0.053px;left:754.700px;top:478.500px;font-size:6.4px;color:#bbbbbb">Event Log</span>
<!-- status bar -->
<div class="abs" style="left:3px;top:491.500px;width:6.500px;height:6px;border:1px solid #afb1b3;border-radius:1px"></div>
<span class="t" style="letter-spacing:0.025px;left:17px;top:489.800px;font-size:6.4px;color:#bbbbbb">IDE and Plugin Updates: PyCharm is ready to update. (2019-07-20 14:44)</span>
<span class="t" style="letter-spacing:-0.102px;left:564px;top:489.800px;font-size:6.4px;color:#bbbbbb">111:83</span>
<span class="t" style="letter-spacing:-0.234px;left:588px;top:489.800px;font-size:6.4px;color:#bbbbbb">LF</span>
<span class="t" style="letter-spacing:0.178px;left:606.500px;top:489.800px;font-size:6.4px;color:#bbbbbb">UTF-8</span>
<span class="t" style="letter-spacing:-0.012px;left:637px;top:489.800px;font-size:6.4px;color:#bbbbbb">4 spaces</span>
<span class="t" style="letter-spacing:0.023px;left:676.500px;top:489.800px;font-size:6.4px;color:#bbbbbb">Git: master</span>
<span class="t" style="letter-spacing:-0.026px;left:718.700px;top:489.800px;font-size:6.4px;color:#bbbbbb">Python 3.7</span>
<svg class="abs" style="left:598.8px;top:491.800px" width="3.400" height="5.600" viewBox="0 0 34 56"><path d="M17 0L34 22H0zM17 56L0 34H34z" fill="#9da0a2"/></svg><svg class="abs" style="left:627.8px;top:491.800px" width="3.400" height="5.600" viewBox="0 0 34 56"><path d="M17 0L34 22H0zM17 56L0 34H34z" fill="#9da0a2"/></svg><svg class="abs" style="left:665.8px;top:491.800px" width="3.400" height="5.600" viewBox="0 0 34 56"><path d="M17 0L34 22H0zM17 56L0 34H34z" fill="#9da0a2"/></svg><svg class="abs" style="left:710.8px;top:491.800px" width="3.400" height="5.600" viewBox="0 0 34 56"><path d="M17 0L34 22H0zM17 56L0 34H34z" fill="#9da0a2"/></svg><svg class="abs" style="left:751.8px;top:491.800px" width="3.400" height="5.600" viewBox="0 0 34 56"><path d="M17 0L34 22H0zM17 56L0 34H34z" fill="#9da0a2"/></svg>
<svg class="abs" style="left:760.500px;top:491px" width="7" height="7" viewBox="0 0 14 14"><rect x="2" y="6.500" width="9" height="6.500" fill="#afb1b3"/><path d="M8 6.500V4a2.500 2.500 0 0 1 5 0v1" fill="none" stroke="#afb1b3" stroke-width="1.500"/></svg>
<svg class="abs" style="left:774.500px;top:490.500px" width="7" height="8" viewBox="0 0 14 16"><path d="M3 2h8v3H3zM2 6h10v8H2z" fill="#afb1b3"/><path d="M4 9h6M4 11.500h6" stroke="#3c3f41" stroke-width="1"/></svg>
<svg class="abs" style="left:789px;top:490.500px" width="8" height="8" viewBox="0 0 16 16"><circle cx="8" cy="5" r="3.500" fill="#afb1b3"/><path d="M1.500 15c0-5 2.500-6.500 6.500-6.500s6.500 1.500 6.500 6.500z" fill="#afb1b3"/><path d="M5 4.500h2M9 4.500h2" stroke="#3c3f41" stroke-width="1"/></svg>

</div>
</body>
</html>
